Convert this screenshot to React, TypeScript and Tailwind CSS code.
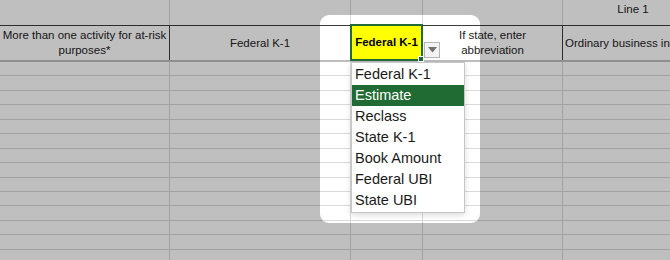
import React from 'react';

const grid = 'border-[#d9d9d9]';
const dark = 'border-[#3c3c3c]';

const options = ['Federal K-1', 'Estimate', 'Reclass', 'State K-1', 'Book Amount', 'Federal UBI', 'State UBI'];

const BodyRow: React.FC = () => (
  <div className={`flex h-[14.44px] shrink-0 border-b ${grid}`}>
    <div className={`w-[170px] shrink-0 border-r ${grid}`} />
    <div className={`w-[181px] shrink-0 border-r ${grid}`} />
    <div className={`w-[72px] shrink-0 border-r ${grid}`} />
    <div className={`w-[140px] shrink-0 border-r ${grid}`} />
    <div className="flex-1" />
  </div>
);

const App: React.FC = () => {
  return (
    <div className="relative w-[670px] h-[260px] overflow-hidden bg-white text-[#1c1c1c] font-['Liberation_Sans',Arial,sans-serif]">
      {/* sheet */}
      <div className="flex flex-col">
        {/* group row */}
        <div className={`flex h-[26px] shrink-0 border-b ${dark} text-[11.5px]`}>
          <div className={`w-[170px] shrink-0 border-r ${grid}`} />
          <div className={`w-[181px] shrink-0 border-r ${grid}`} />
          <div className={`w-[72px] shrink-0 border-r ${grid}`} />
          <div className={`w-[140px] shrink-0 border-r ${grid}`} />
          <div className="w-[140px] shrink-0 pt-[2px] text-center leading-[14px]">Line 1</div>
        </div>

        {/* header row */}
        <div className="flex h-[36px] shrink-0 border-b-2 border-[#bebebe] text-[11.5px] leading-[15px]">
          <div className={`w-[170px] shrink-0 border-r ${dark} flex flex-col items-center justify-center overflow-hidden whitespace-nowrap`}>
            <span>More than one activity for at-risk</span>
            <span>purposes*</span>
          </div>
          <div className={`w-[181px] shrink-0 border-r ${grid} flex items-center justify-center`}>Federal K-1</div>
          <div className={`w-[72px] shrink-0 border-r ${grid}`} />
          <div className={`w-[140px] shrink-0 border-r ${dark} flex flex-col items-center justify-center`}>
            <span>If state, enter</span>
            <span>abbreviation</span>
          </div>
          <div className="flex-1 flex items-center pl-[2px] whitespace-nowrap overflow-hidden">Ordinary business income (loss)</div>
        </div>

        {Array.from({ length: 14 }).map((_, i) => (
          <BodyRow key={i} />
        ))}
      </div>

      {/* selected cell */}
      <div className="absolute left-[350px] top-[24px] w-[73px] h-[37px] border-2 border-[#216b37] bg-[#ffff00] flex items-center justify-center text-[11.5px] font-bold text-black">
        Federal K-1
      </div>
      <div className="absolute left-[418px] top-[56px] w-[6px] h-[6px] bg-[#216b37] border border-white" />

      {/* validation arrow */}
      <div className="absolute left-[424px] top-[42px] w-[16px] h-[16px] border border-[#b5b5b5] bg-[#f3f3f3] flex items-center justify-center">
        <svg width="9" height="6" viewBox="0 0 9 6">
          <path d="M0 0 L9 0 L4.5 5.5 Z" fill="#707070" />
        </svg>
      </div>

      {/* dropdown list */}
      <div className="absolute left-[351px] top-[62px] w-[114px] border border-[#c6c6c6] bg-white py-px shadow-[0_2px_6px_rgba(0,0,0,0.15)]">
        {options.map((o) => (
          <div
            key={o}
            className={`h-[21px] pl-[3px] text-[14.5px] leading-[21px] whitespace-nowrap ${
              o === 'Estimate' ? 'bg-[#1f6b33] text-white' : 'text-[#1a1a1a]'
            }`}
          >
            {o}
          </div>
        ))}
      </div>

      {/* spotlight */}
      <div className="pointer-events-none absolute left-[320px] top-[15px] w-[160px] h-[208px] rounded-[9px] shadow-[0_0_0_1200px_rgba(0,0,0,0.25)]" />
    </div>
  );
};

export default App;
